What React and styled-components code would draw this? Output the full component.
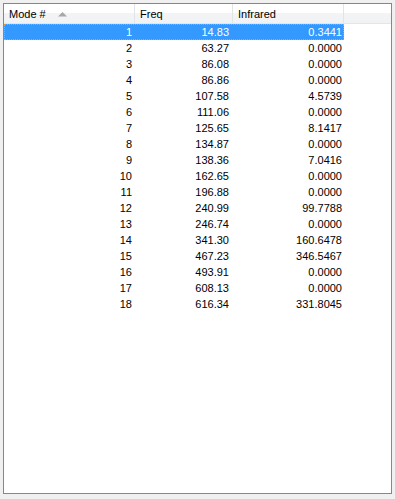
import React from 'react';
import styled, { createGlobalStyle } from 'styled-components';

const GlobalStyle = createGlobalStyle`
  html, body {
    margin: 0;
    padding: 0;
    background: #f0f0f0;
  }
  body {
    font-family: "Liberation Sans", Arial, sans-serif;
    font-size: 11px;
  }
`;

const rows = [
  [1, '14.83', '0.3441'],
  [2, '63.27', '0.0000'],
  [3, '86.08', '0.0000'],
  [4, '86.86', '0.0000'],
  [5, '107.58', '4.5739'],
  [6, '111.06', '0.0000'],
  [7, '125.65', '8.1417'],
  [8, '134.87', '0.0000'],
  [9, '138.36', '7.0416'],
  [10, '162.65', '0.0000'],
  [11, '196.88', '0.0000'],
  [12, '240.99', '99.7788'],
  [13, '246.74', '0.0000'],
  [14, '341.30', '160.6478'],
  [15, '467.23', '346.5467'],
  [16, '493.91', '0.0000'],
  [17, '608.13', '0.0000'],
  [18, '616.34', '331.8045'],
];

const widths = [131, 98, 111];

const Frame = styled.div`
  margin: 3px;
  width: 387px;
  height: 489px;
  border: 1px solid #828790;
  background: #ffffff;
  overflow: hidden;
`;

const Header = styled.div`
  display: flex;
  height: 19px;
  border-bottom: 1px solid #e5e5e5;
  background: linear-gradient(to bottom, #ffffff 0%, #ffffff 45%, #f3f4f6 50%, #f1f2f4 100%);
`;

const HeadCell = styled.div`
  position: relative;
  display: flex;
  align-items: center;
  width: ${p => p.$w}px;
  flex: ${p => (p.$fill ? '1' : 'none')};
  box-sizing: border-box;
  padding-left: 5px;
  border-right: ${p => (p.$fill ? 'none' : '1px solid #e3e4e6')};
  color: #000;
`;

const SortArrow = styled.svg`
  position: absolute;
  left: 53px;
  top: 7px;
`;

const Row = styled.div`
  display: flex;
  width: 340px;
  height: 16px;
  box-sizing: border-box;
  background: ${p => (p.$selected ? '#3399ff' : 'transparent')};
  color: ${p => (p.$selected ? '#ffffff' : '#000000')};
  outline: ${p => (p.$selected ? '1px dotted #e89a3c' : 'none')};
  outline-offset: -1px;
`;

const Cell = styled.div`
  width: ${p => p.$w}px;
  flex: none;
  box-sizing: border-box;
  padding-right: ${p => p.$pr}px;
  text-align: right;
  line-height: 16px;
  white-space: nowrap;
`;

export default function App() {
  return (
    <>
      <GlobalStyle />
      <Frame>
        <Header>
          <HeadCell $w={widths[0]}>
            Mode #
            <SortArrow width="11" height="6" viewBox="0 0 11 6">
              <polygon points="1,5.5 10,5.5 5.5,1" fill="#a7a7a7" />
            </SortArrow>
          </HeadCell>
          <HeadCell $w={widths[1]}>Freq</HeadCell>
          <HeadCell $w={widths[2]}>Infrared</HeadCell>
          <HeadCell $fill />
        </Header>
        {rows.map(([mode, freq, ir], i) => (
          <Row key={mode} $selected={i === 0}>
            <Cell $w={widths[0]} $pr={3}>{mode}</Cell>
            <Cell $w={widths[1]} $pr={4}>{freq}</Cell>
            <Cell $w={widths[2]} $pr={2}>{ir}</Cell>
          </Row>
        ))}
      </Frame>
    </>
  );
}
